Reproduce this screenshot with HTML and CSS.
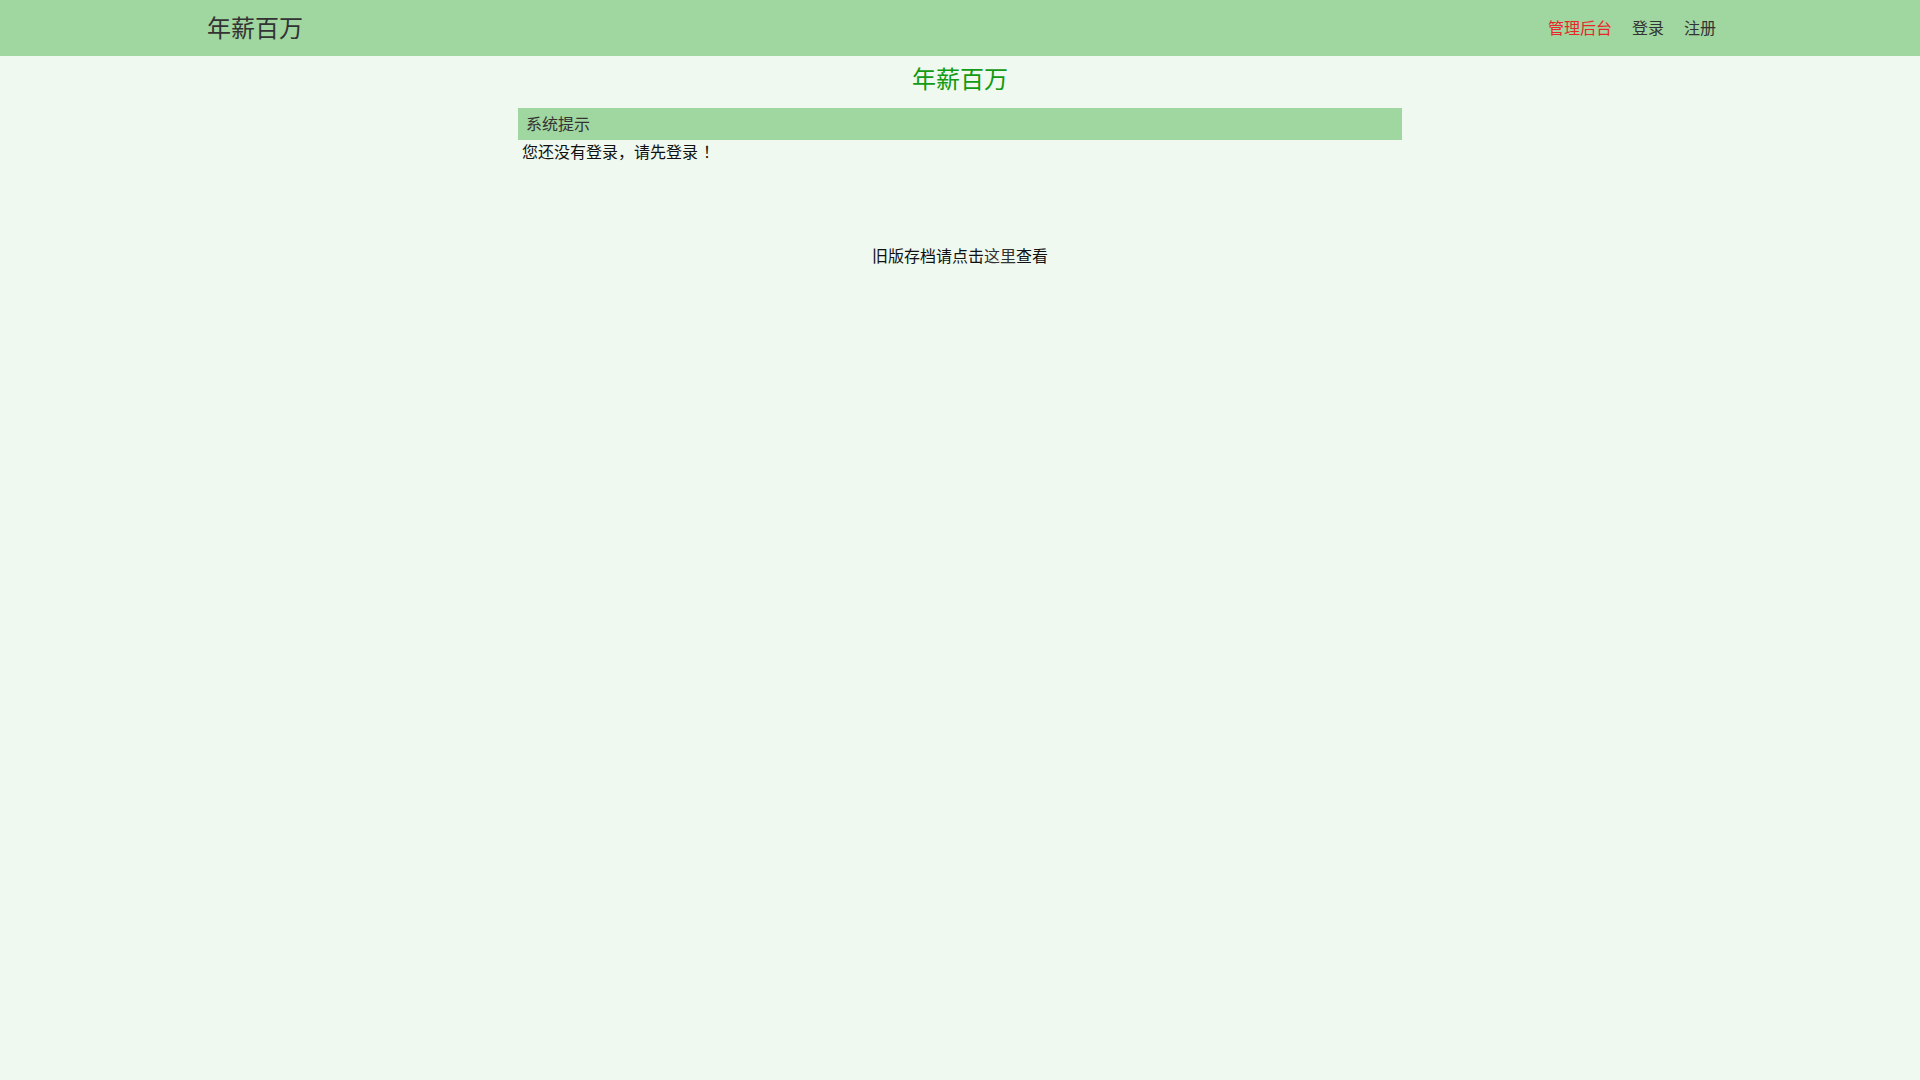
FILE: index.html
```html
<!DOCTYPE html>
<html lang="zh-CN">
<head>
<meta charset="utf-8">
<title>年薪百万</title>
<link rel="stylesheet" href="styles.css">
</head>
<body>
<header class="topbar">
  <div class="topbar-inner">
    <a class="brand" href="#">年薪百万</a>
    <nav class="nav">
      <a class="nav-link nav-admin" href="#">管理后台</a>
      <a class="nav-link" href="#">登录</a>
      <a class="nav-link" href="#">注册</a>
    </nav>
  </div>
</header>
<main class="main">
  <h1 class="site-title">年薪百万</h1>
  <section class="panel">
    <div class="panel-head">系统提示</div>
    <div class="panel-body">您还没有登录，请先登录<span class="punct">！</span></div>
  </section>
  <p class="archive">旧版存档请点击<a class="archive-link" href="#">这里</a>查看</p>
</main>
</body>
</html>
```

FILE: styles.css
```css
html, body {
  margin: 0;
  padding: 0;
}
body {
  background: #eff9ef;
  font-family: "Noto Sans CJK SC", "Noto Sans", "Liberation Sans", sans-serif;
  font-size: 16px;
  color: #111;
  min-height: 1080px;
}
a {
  text-decoration: none;
}
.topbar {
  background: #a0d6a0;
  height: 56px;
}
.topbar-inner {
  height: 54px;
  padding: 0 204px 2px 207px;
  display: flex;
  align-items: center;
  justify-content: space-between;
}
.brand {
  font-size: 24px;
  line-height: 32px;
  color: #333;
}
.nav {
  display: flex;
  gap: 20px;
  align-items: center;
}
.nav-link {
  font-size: 16px;
  line-height: 24px;
  color: #333;
}
.nav-admin {
  color: #e8272b;
}
.main {
  display: flex;
  flex-direction: column;
  align-items: center;
}
.site-title {
  margin: 6px 0 0;
  font-size: 24px;
  line-height: 32px;
  font-weight: normal;
  color: #129a12;
}
.panel {
  width: 884px;
  margin-top: 14px;
}
.panel-head {
  background: #a0d6a0;
  height: 32px;
  line-height: 30px;
  padding: 0 8px;
  box-sizing: border-box;
  color: #333;
}
.panel-body {
  line-height: 22px;
  padding: 0 4px 2px;
  color: #111;
}
.punct {
  display: inline-block;
  padding-left: 5px;
}
.archive {
  margin: 79px 0 0;
  line-height: 24px;
  color: #111;
}
.archive-link {
  color: #333;
}
```
